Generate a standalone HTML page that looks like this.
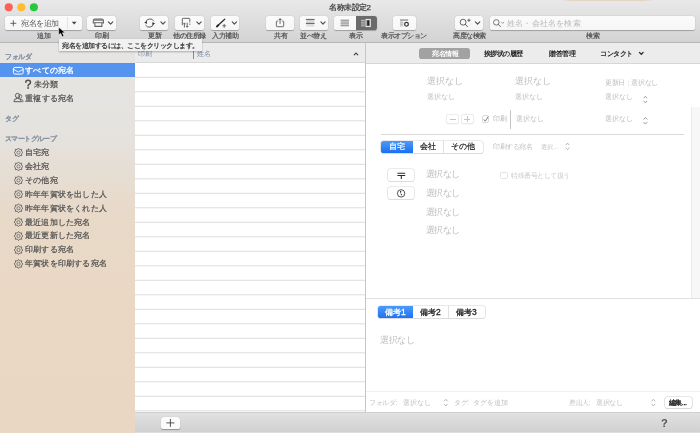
<!DOCTYPE html>
<html><head><meta charset="utf-8">
<style>
*{margin:0;padding:0;box-sizing:border-box}
html,body{width:700px;height:433px;overflow:hidden;background:#fff;font-family:"Liberation Sans",sans-serif;position:relative}
.a{position:absolute}
.t{position:absolute;white-space:nowrap;will-change:transform}
</style></head><body>
<div class="a" style="left:0px;top:0px;width:700px;height:43px;background:linear-gradient(#e9e9e9,#e2e2e2 30%,#d3d3d3);border-bottom:1px solid #b7b7b7"></div>
<div class="a" style="left:560px;top:0px;width:95px;height:1px;background:linear-gradient(90deg,rgba(226,214,196,0),#e2d6c2 12%,#e2d6c2 88%,rgba(226,214,196,0))"></div>
<svg class="a" style="left:0;top:0" width="42" height="16" viewBox="0 0 42 16"><circle cx="8.75" cy="7.2" r="4.05" fill="#fe5f57"/><circle cx="21.3" cy="7.2" r="4.05" fill="#febc2e"/><circle cx="33.9" cy="7.2" r="4.05" fill="#29c73f"/></svg>
<div class="t" style="left:328.5px;top:1.70px;font-size:8px;line-height:11px;color:#404040;letter-spacing:-0.5px;-webkit-text-stroke:0.25px #404040;">名称未設定2</div>
<div class="a" style="left:5.3px;top:16px;width:76.4px;height:13.6px;border-radius:2.6px;background:linear-gradient(#fbfbfb,#f6f6f6);box-shadow:0 0.5px 0.8px rgba(0,0,0,.25),0 0 0 0.3px rgba(0,0,0,.06)"></div>
<div class="a" style="left:87px;top:16px;width:28.8px;height:13.6px;border-radius:2.6px;background:linear-gradient(#fbfbfb,#f6f6f6);box-shadow:0 0.5px 0.8px rgba(0,0,0,.25),0 0 0 0.3px rgba(0,0,0,.06)"></div>
<div class="a" style="left:139.8px;top:16px;width:28.2px;height:13.6px;border-radius:2.6px;background:linear-gradient(#fbfbfb,#f6f6f6);box-shadow:0 0.5px 0.8px rgba(0,0,0,.25),0 0 0 0.3px rgba(0,0,0,.06)"></div>
<div class="a" style="left:175.4px;top:16px;width:28.4px;height:13.6px;border-radius:2.6px;background:linear-gradient(#fbfbfb,#f6f6f6);box-shadow:0 0.5px 0.8px rgba(0,0,0,.25),0 0 0 0.3px rgba(0,0,0,.06)"></div>
<div class="a" style="left:211px;top:16px;width:28.3px;height:13.6px;border-radius:2.6px;background:linear-gradient(#fbfbfb,#f6f6f6);box-shadow:0 0.5px 0.8px rgba(0,0,0,.25),0 0 0 0.3px rgba(0,0,0,.06)"></div>
<div class="a" style="left:266px;top:16px;width:28px;height:13.6px;border-radius:2.6px;background:linear-gradient(#fbfbfb,#f6f6f6);box-shadow:0 0.5px 0.8px rgba(0,0,0,.25),0 0 0 0.3px rgba(0,0,0,.06)"></div>
<div class="a" style="left:299.8px;top:16px;width:28.2px;height:13.6px;border-radius:2.6px;background:linear-gradient(#fbfbfb,#f6f6f6);box-shadow:0 0.5px 0.8px rgba(0,0,0,.25),0 0 0 0.3px rgba(0,0,0,.06)"></div>
<div class="a" style="left:393px;top:16px;width:23.2px;height:13.6px;border-radius:2.6px;background:linear-gradient(#fbfbfb,#f6f6f6);box-shadow:0 0.5px 0.8px rgba(0,0,0,.25),0 0 0 0.3px rgba(0,0,0,.06)"></div>
<div class="a" style="left:454.8px;top:16px;width:28.2px;height:13.6px;border-radius:2.6px;background:linear-gradient(#fbfbfb,#f6f6f6);box-shadow:0 0.5px 0.8px rgba(0,0,0,.25),0 0 0 0.3px rgba(0,0,0,.06)"></div>
<div class="a" style="left:490px;top:16px;width:204.8px;height:13.6px;border-radius:2.6px;background:linear-gradient(#fbfbfb,#f6f6f6);box-shadow:0 0.5px 0.8px rgba(0,0,0,.25),0 0 0 0.3px rgba(0,0,0,.06)"></div>
<div class="a" style="left:334px;top:16px;width:43.2px;height:13.6px;border-radius:2.6px;background:linear-gradient(#fbfbfb,#f6f6f6);box-shadow:0 0.5px 0.8px rgba(0,0,0,.25),0 0 0 0.3px rgba(0,0,0,.06);overflow:hidden"></div>
<div class="a" style="left:356px;top:16px;width:21.2px;height:13.6px;background:#6b6b6b;border-radius:0 2.6px 2.6px 0"></div>
<div class="a" style="left:66.6px;top:16.8px;width:0.7px;height:12px;background:#e4e4e4"></div>
<div class="t" style="left:21.2px;top:17.60px;font-size:8px;line-height:11px;color:#555;letter-spacing:-0.4px;">宛名を追加</div>
<div class="t" style="left:506.5px;top:17.50px;font-size:8px;line-height:11px;color:#b9b9b9;letter-spacing:0.2px;">姓名・会社名を検索</div>
<div class="t" style="left:37.3px;top:31.10px;font-size:6.5px;line-height:9px;color:#505050;letter-spacing:-0.5px;-webkit-text-stroke:0.2px #505050;">追加</div>
<div class="t" style="left:95.1px;top:31.10px;font-size:6.5px;line-height:9px;color:#505050;letter-spacing:-0.5px;-webkit-text-stroke:0.2px #505050;">印刷</div>
<div class="t" style="left:147.7px;top:31.10px;font-size:6.5px;line-height:9px;color:#505050;letter-spacing:-0.5px;-webkit-text-stroke:0.2px #505050;">更新</div>
<div class="t" style="left:173.25px;top:31.10px;font-size:6.5px;line-height:9px;color:#505050;letter-spacing:-0.5px;-webkit-text-stroke:0.2px #505050;">他の住所録</div>
<div class="t" style="left:211.8px;top:31.10px;font-size:6.5px;line-height:9px;color:#505050;letter-spacing:-0.5px;-webkit-text-stroke:0.2px #505050;">入力補助</div>
<div class="t" style="left:273.7px;top:31.10px;font-size:6.5px;line-height:9px;color:#505050;letter-spacing:-0.5px;-webkit-text-stroke:0.2px #505050;">共有</div>
<div class="t" style="left:299.9px;top:31.10px;font-size:6.5px;line-height:9px;color:#505050;letter-spacing:-0.5px;-webkit-text-stroke:0.2px #505050;">並べ替え</div>
<div class="t" style="left:349.1px;top:31.10px;font-size:6.5px;line-height:9px;color:#505050;letter-spacing:-0.5px;-webkit-text-stroke:0.2px #505050;">表示</div>
<div class="t" style="left:381.35px;top:31.10px;font-size:6.5px;line-height:9px;color:#505050;letter-spacing:-0.5px;-webkit-text-stroke:0.2px #505050;">表示オプション</div>
<div class="t" style="left:452.65px;top:31.10px;font-size:6.5px;line-height:9px;color:#505050;letter-spacing:-0.5px;-webkit-text-stroke:0.2px #505050;">高度な検索</div>
<div class="t" style="left:586.1px;top:31.10px;font-size:6.5px;line-height:9px;color:#505050;letter-spacing:-0.5px;-webkit-text-stroke:0.2px #505050;">検索</div>
<svg class="a" style="left:0;top:0" width="700" height="43" viewBox="0 0 700 43">
 <g fill="none" stroke="#505050" stroke-width="1.2" stroke-linecap="round" stroke-linejoin="round">
  <path d="M108.4 21.9 L110.6 24.1 L112.8 21.9"/>
  <path d="M160.9 21.9 L163 24.1 L165.1 21.9"/>
  <path d="M196.8 21.9 L199 24.1 L201.2 21.9"/>
  <path d="M232.3 21.9 L234.4 24.1 L236.5 21.9"/>
  <path d="M320.9 21.9 L323 24.1 L325.1 21.9"/>
  <path d="M475.4 21.9 L477.6 24.1 L479.8 21.9"/>
 </g>
 <path d="M5 0" />
 <!-- + in add button -->
 <path d="M10.4 23.3 H16.3 M13.35 20.3 V26.3" stroke="#555" stroke-width="0.9"/>
 <path d="M71.8 21.8 H76.6 L74.2 24.4 Z" fill="#444"/>
 <!-- printer -->
 <path d="M93.3 23.6 V20.6 Q93.3 19 95 19 H101.7 Q103.4 19 103.4 20.6 V23.6" fill="none" stroke="#666" stroke-width="1.1"/>
 <rect x="93.6" y="19.2" width="9.5" height="1.6" fill="#7a7a7a"/>
 <path d="M93.2 22.7 H103.5" stroke="#666" stroke-width="1"/>
 <path d="M94.9 22.9 V26.4 H101.9 V22.9" fill="none" stroke="#666" stroke-width="1.1"/>
 <!-- update -->
 <path d="M145.7 22.6 A4.4 4.4 0 0 1 153.9 21.2" fill="none" stroke="#555" stroke-width="0.95"/>
 <path d="M153.6 23.7 A4.4 4.4 0 0 1 145.5 25" fill="none" stroke="#555" stroke-width="0.95"/>
 <path d="M144.2 22.6 L146.9 21.3 L146.9 24.1 Z" fill="#333"/>
 <path d="M155.1 23.6 L152.4 24.9 L152.4 22.1 Z" fill="#333"/>
 <!-- other address book -->
 <path d="M182.3 25.2 V19.1 Q182.3 18.3 183.1 18.3 H189 Q189.8 18.3 189.8 19.1 V21.8" fill="none" stroke="#5a5a5a" stroke-width="0.95"/>
 <path d="M189.8 22.5 V23.3 M189.8 23.9 V24.8" fill="none" stroke="#5a5a5a" stroke-width="0.95"/>
 <path d="M184.4 27.5 V23.4 M183.4 24.2 L184.4 22.9 L185.4 24.2 M187.2 22.7 V26.8 M186.2 26 L187.2 27.3 L188.2 26" fill="none" stroke="#4a4a4a" stroke-width="0.85"/>
 <!-- input helper -->
 <path d="M217.6 25.8 L224.7 19.3" fill="none" stroke="#333" stroke-width="1.35" stroke-linecap="round"/>
 <path d="M216.9 26.5 L218.4 25.1" stroke="#222" stroke-width="1.8" stroke-linecap="round"/>
 <path d="M222.3 25.8 H226.1 M224.2 23.9 V27.7" stroke="#707070" stroke-width="1.1"/>
 <!-- share -->
 <path d="M278.2 21 H277.2 Q276.4 21 276.4 21.8 V25.9 Q276.4 26.7 277.2 26.7 H282.9 Q283.7 26.7 283.7 25.9 V21.8 Q283.7 21 282.9 21 H281.9" fill="none" stroke="#6a6a6a" stroke-width="1"/>
 <path d="M280.05 23.8 V19.2" stroke="#6a6a6a" stroke-width="1"/>
 <path d="M278.2 20.1 L280.05 17.9 L281.9 20.1 Z" fill="#6a6a6a"/>
 <!-- sort -->
 <rect x="306.3" y="20.1" width="8" height="2.7" fill="#dadada"/>
 <rect x="306.3" y="24" width="8" height="2.6" fill="#dcdcdc"/>
 <rect x="305.9" y="18.9" width="8.7" height="1.2" fill="#6e6e6e"/>
 <rect x="305.9" y="22.8" width="8.7" height="1.2" fill="#6e6e6e"/>
 <!-- view list icon -->
 <rect x="340.6" y="19.6" width="8.4" height="1.3" fill="#9c9c9c"/>
 <rect x="340.6" y="21.4" width="8.4" height="1.3" fill="#9c9c9c"/>
 <rect x="340.6" y="23.2" width="8.4" height="1.3" fill="#9c9c9c"/>
 <rect x="340.6" y="25" width="8.4" height="1.3" fill="#9c9c9c"/>
 <!-- view detail icon (on dark) -->
 <rect x="361" y="19.8" width="3.8" height="1.2" fill="#b5b5b5"/>
 <rect x="361" y="21.6" width="3.8" height="1.2" fill="#b5b5b5"/>
 <rect x="361" y="23.4" width="3.8" height="1.2" fill="#b5b5b5"/>
 <rect x="361" y="25.2" width="3.8" height="1.2" fill="#b5b5b5"/>
 <rect x="366" y="19.4" width="4.3" height="7.2" fill="none" stroke="#fafafa" stroke-width="0.9"/>
 <rect x="367.3" y="20.7" width="1.7" height="4.6" fill="#222"/>
 <!-- display options -->
 <rect x="400" y="19.4" width="8.2" height="1.3" fill="#8a8a8a"/>
 <rect x="400" y="21.2" width="3.3" height="5.5" fill="#d2d2d2"/>
 <rect x="400" y="22.6" width="3.3" height="0.6" fill="#b8b8b8"/>
 <rect x="400" y="24.4" width="3.3" height="0.6" fill="#b8b8b8"/>
 <circle cx="406.5" cy="24.25" r="1.85" fill="#fff" stroke="#333" stroke-width="1.25"/>
 <!-- advanced search -->
 <circle cx="463.1" cy="22.2" r="2.95" fill="none" stroke="#555" stroke-width="0.9"/>
 <path d="M465.2 24.3 L467.5 26.6" stroke="#555" stroke-width="1" stroke-linecap="round"/>
 <path d="M467.3 20.25 H470.5 M468.9 18.65 V21.85" stroke="#444" stroke-width="0.8"/>
 <!-- search field -->
 <circle cx="496.3" cy="22.4" r="2.75" fill="none" stroke="#666" stroke-width="0.9"/>
 <path d="M498.3 24.4 L500.5 26.6" stroke="#666" stroke-width="1" stroke-linecap="round"/>
 <path d="M501.4 22.1 L502.65 23.4 L503.9 22.1" fill="none" stroke="#777" stroke-width="0.75"/>
</svg>
<div class="a" style="left:0px;top:43px;width:135px;height:390px;background:linear-gradient(#e6e5e3 0%,#e5e3e0 22%,#e6ded5 32%,#e8d9c8 45%,#e9d8c5 60%,#e9d7c3 100%)"></div>
<div class="t" style="left:4.6px;top:51.60px;font-size:6.5px;line-height:9px;color:#8490a0;letter-spacing:-0.3px;-webkit-text-stroke:0.4px #8490a0;">フォルダ</div>
<div class="a" style="left:0px;top:63.3px;width:135px;height:13.6px;background:#5594ee"></div>
<div class="t" style="left:24.6px;top:64.60px;font-size:8px;line-height:11px;color:#fff;letter-spacing:0.3px;-webkit-text-stroke:0.3px #fff;">すべての宛名</div>
<div class="t" style="left:34.4px;top:78.90px;font-size:8px;line-height:11px;color:#4a4a4a;letter-spacing:0.2px;-webkit-text-stroke:0.2px #4a4a4a;">未分類</div>
<div class="t" style="left:24.6px;top:92.60px;font-size:8px;line-height:11px;color:#4a4a4a;letter-spacing:0.3px;-webkit-text-stroke:0.2px #4a4a4a;">重複する宛名</div>
<div class="t" style="left:4.6px;top:113.70px;font-size:6.5px;line-height:9px;color:#8490a0;letter-spacing:-0.3px;-webkit-text-stroke:0.4px #8490a0;">タグ</div>
<div class="t" style="left:4.6px;top:133.80px;font-size:6.5px;line-height:9px;color:#8490a0;letter-spacing:-0.6px;-webkit-text-stroke:0.4px #8490a0;">スマートグループ</div>
<div class="t" style="left:25px;top:146.90px;font-size:8px;line-height:11px;color:#4e4e4e;letter-spacing:0.2px;-webkit-text-stroke:0.2px #4e4e4e;">自宅宛</div>
<div class="t" style="left:25px;top:160.83px;font-size:8px;line-height:11px;color:#4e4e4e;letter-spacing:0.2px;-webkit-text-stroke:0.2px #4e4e4e;">会社宛</div>
<div class="t" style="left:25px;top:174.76px;font-size:8px;line-height:11px;color:#4e4e4e;letter-spacing:0.2px;-webkit-text-stroke:0.2px #4e4e4e;">その他宛</div>
<div class="t" style="left:25px;top:188.69px;font-size:8px;line-height:11px;color:#4e4e4e;letter-spacing:0.2px;-webkit-text-stroke:0.2px #4e4e4e;">昨年年賀状を出した人</div>
<div class="t" style="left:25px;top:202.62px;font-size:8px;line-height:11px;color:#4e4e4e;letter-spacing:0.2px;-webkit-text-stroke:0.2px #4e4e4e;">昨年年賀状をくれた人</div>
<div class="t" style="left:25px;top:216.55px;font-size:8px;line-height:11px;color:#4e4e4e;letter-spacing:0.2px;-webkit-text-stroke:0.2px #4e4e4e;">最近追加した宛名</div>
<div class="t" style="left:25px;top:230.48px;font-size:8px;line-height:11px;color:#4e4e4e;letter-spacing:0.2px;-webkit-text-stroke:0.2px #4e4e4e;">最近更新した宛名</div>
<div class="t" style="left:25px;top:244.41px;font-size:8px;line-height:11px;color:#4e4e4e;letter-spacing:0.2px;-webkit-text-stroke:0.2px #4e4e4e;">印刷する宛名</div>
<div class="t" style="left:25px;top:258.34px;font-size:8px;line-height:11px;color:#4e4e4e;letter-spacing:0.2px;-webkit-text-stroke:0.2px #4e4e4e;">年賀状を印刷する宛名</div>
<svg class="a" style="left:0;top:0" width="135" height="300" viewBox="0 0 135 300">
 <rect x="13.4" y="67.4" width="9.8" height="6.7" rx="1.6" fill="none" stroke="#fff" stroke-width="1"/>
 <path d="M13.6 69.4 L18.3 72 L23 69.4" fill="none" stroke="#fff" stroke-width="0.9"/>
 <path d="M25.8 82.3 Q25.8 80.3 28.1 80.3 Q30.5 80.3 30.5 82.3 Q30.5 83.7 29 84.4 Q28.1 84.9 28.1 86" fill="none" stroke="#505050" stroke-width="1.5" stroke-linecap="round"/>
 <circle cx="28.1" cy="88" r="0.9" fill="#505050"/>
 <circle cx="17.6" cy="95.6" r="2.2" fill="none" stroke="#5a5a5a" stroke-width="1"/>
 <path d="M13.9 101.7 Q13.9 98.4 17.6 98.4 Q21.3 98.4 21.3 101.7 Z" fill="none" stroke="#5a5a5a" stroke-width="1"/>
 <circle cx="20.1" cy="96.4" r="1.8" fill="none" stroke="#6a6a6a" stroke-width="0.85"/>
 <path d="M20.6 99 Q23.2 99.3 23.2 101.7 H21.6" fill="none" stroke="#6a6a6a" stroke-width="0.85"/>
 <polygon points="18.50,148.00 19.74,149.50 21.68,149.32 21.50,151.26 23.00,152.50 21.50,153.74 21.68,155.68 19.74,155.50 18.50,157.00 17.26,155.50 15.32,155.68 15.50,153.74 14.00,152.50 15.50,151.26 15.32,149.32 17.26,149.50" fill="none" stroke="#6a6a6a" stroke-width="0.95" stroke-linejoin="round"/><circle cx="18.5" cy="152.5" r="1.6" fill="none" stroke="#6a6a6a" stroke-width="0.85"/><polygon points="18.50,161.93 19.74,163.43 21.68,163.25 21.50,165.19 23.00,166.43 21.50,167.67 21.68,169.61 19.74,169.43 18.50,170.93 17.26,169.43 15.32,169.61 15.50,167.67 14.00,166.43 15.50,165.19 15.32,163.25 17.26,163.43" fill="none" stroke="#6a6a6a" stroke-width="0.95" stroke-linejoin="round"/><circle cx="18.5" cy="166.43" r="1.6" fill="none" stroke="#6a6a6a" stroke-width="0.85"/><polygon points="18.50,175.86 19.74,177.36 21.68,177.18 21.50,179.12 23.00,180.36 21.50,181.60 21.68,183.54 19.74,183.36 18.50,184.86 17.26,183.36 15.32,183.54 15.50,181.60 14.00,180.36 15.50,179.12 15.32,177.18 17.26,177.36" fill="none" stroke="#6a6a6a" stroke-width="0.95" stroke-linejoin="round"/><circle cx="18.5" cy="180.36" r="1.6" fill="none" stroke="#6a6a6a" stroke-width="0.85"/><polygon points="18.50,189.79 19.74,191.29 21.68,191.11 21.50,193.05 23.00,194.29 21.50,195.53 21.68,197.47 19.74,197.29 18.50,198.79 17.26,197.29 15.32,197.47 15.50,195.53 14.00,194.29 15.50,193.05 15.32,191.11 17.26,191.29" fill="none" stroke="#6a6a6a" stroke-width="0.95" stroke-linejoin="round"/><circle cx="18.5" cy="194.29" r="1.6" fill="none" stroke="#6a6a6a" stroke-width="0.85"/><polygon points="18.50,203.72 19.74,205.22 21.68,205.04 21.50,206.98 23.00,208.22 21.50,209.46 21.68,211.40 19.74,211.22 18.50,212.72 17.26,211.22 15.32,211.40 15.50,209.46 14.00,208.22 15.50,206.98 15.32,205.04 17.26,205.22" fill="none" stroke="#6a6a6a" stroke-width="0.95" stroke-linejoin="round"/><circle cx="18.5" cy="208.22" r="1.6" fill="none" stroke="#6a6a6a" stroke-width="0.85"/><polygon points="18.50,217.65 19.74,219.15 21.68,218.97 21.50,220.91 23.00,222.15 21.50,223.39 21.68,225.33 19.74,225.15 18.50,226.65 17.26,225.15 15.32,225.33 15.50,223.39 14.00,222.15 15.50,220.91 15.32,218.97 17.26,219.15" fill="none" stroke="#6a6a6a" stroke-width="0.95" stroke-linejoin="round"/><circle cx="18.5" cy="222.15" r="1.6" fill="none" stroke="#6a6a6a" stroke-width="0.85"/><polygon points="18.50,231.58 19.74,233.08 21.68,232.90 21.50,234.84 23.00,236.08 21.50,237.32 21.68,239.26 19.74,239.08 18.50,240.58 17.26,239.08 15.32,239.26 15.50,237.32 14.00,236.08 15.50,234.84 15.32,232.90 17.26,233.08" fill="none" stroke="#6a6a6a" stroke-width="0.95" stroke-linejoin="round"/><circle cx="18.5" cy="236.08" r="1.6" fill="none" stroke="#6a6a6a" stroke-width="0.85"/><polygon points="18.50,245.51 19.74,247.01 21.68,246.83 21.50,248.77 23.00,250.01 21.50,251.25 21.68,253.19 19.74,253.01 18.50,254.51 17.26,253.01 15.32,253.19 15.50,251.25 14.00,250.01 15.50,248.77 15.32,246.83 17.26,247.01" fill="none" stroke="#6a6a6a" stroke-width="0.95" stroke-linejoin="round"/><circle cx="18.5" cy="250.01" r="1.6" fill="none" stroke="#6a6a6a" stroke-width="0.85"/><polygon points="18.50,259.44 19.74,260.94 21.68,260.76 21.50,262.70 23.00,263.94 21.50,265.18 21.68,267.12 19.74,266.94 18.50,268.44 17.26,266.94 15.32,267.12 15.50,265.18 14.00,263.94 15.50,262.70 15.32,260.76 17.26,260.94" fill="none" stroke="#6a6a6a" stroke-width="0.95" stroke-linejoin="round"/><circle cx="18.5" cy="263.94" r="1.6" fill="none" stroke="#6a6a6a" stroke-width="0.85"/>
</svg>
<div class="a" style="left:135px;top:43px;width:230px;height:20px;background:#ebebeb;border-bottom:1px solid #d8d8d8"></div>
<div class="t" style="left:138.3px;top:49.00px;font-size:6.5px;line-height:9px;color:#8391a5;letter-spacing:-0.5px;">印刷</div>
<div class="a" style="left:193px;top:50.8px;width:0.9px;height:8.6px;background:#8a8a8a"></div>
<div class="t" style="left:197.2px;top:48.80px;font-size:6.5px;line-height:9px;color:#8391a5;letter-spacing:-0.5px;">姓名</div>
<svg class="a" style="left:340px;top:50px" width="24" height="8" viewBox="340 50 24 8"><path d="M354.2 54.9 L356 53 L357.8 54.9" fill="none" stroke="#444" stroke-width="1.1" stroke-linecap="round"/></svg>
<svg class="a" style="left:135px;top:0" width="230" height="412" viewBox="0 0 230 412"><rect x="0" y="76.80" width="230" height="1" fill="#dddddd"/><rect x="0" y="91.30" width="230" height="1" fill="#dddddd"/><rect x="0" y="105.80" width="230" height="1" fill="#dddddd"/><rect x="0" y="120.30" width="230" height="1" fill="#dddddd"/><rect x="0" y="134.80" width="230" height="1" fill="#dddddd"/><rect x="0" y="149.30" width="230" height="1" fill="#dddddd"/><rect x="0" y="163.80" width="230" height="1" fill="#dddddd"/><rect x="0" y="178.30" width="230" height="1" fill="#dddddd"/><rect x="0" y="192.80" width="230" height="1" fill="#dddddd"/><rect x="0" y="207.30" width="230" height="1" fill="#dddddd"/><rect x="0" y="221.80" width="230" height="1" fill="#dddddd"/><rect x="0" y="236.30" width="230" height="1" fill="#dddddd"/><rect x="0" y="250.80" width="230" height="1" fill="#dddddd"/><rect x="0" y="265.30" width="230" height="1" fill="#dddddd"/><rect x="0" y="279.80" width="230" height="1" fill="#dddddd"/><rect x="0" y="294.30" width="230" height="1" fill="#dddddd"/><rect x="0" y="308.80" width="230" height="1" fill="#dddddd"/><rect x="0" y="323.30" width="230" height="1" fill="#dddddd"/><rect x="0" y="337.80" width="230" height="1" fill="#dddddd"/><rect x="0" y="352.30" width="230" height="1" fill="#dddddd"/><rect x="0" y="366.80" width="230" height="1" fill="#dddddd"/><rect x="0" y="381.30" width="230" height="1" fill="#dddddd"/><rect x="0" y="395.80" width="230" height="1" fill="#dddddd"/><rect x="0" y="410.30" width="230" height="1" fill="#dddddd"/></svg>
<div class="a" style="left:365px;top:42.5px;width:1px;height:370px;background:#c6c6c6"></div>
<div class="a" style="left:366px;top:43px;width:334px;height:20.5px;background:#ececec;border-bottom:1px solid #d6d6d6"></div>
<div class="a" style="left:418.6px;top:47.8px;width:51.8px;height:10.8px;border-radius:2.8px;background:#a2a2a2"></div>
<div class="t" style="left:431.8px;top:48.90px;font-size:6.5px;line-height:9px;color:#fff;letter-spacing:-0.5px;font-weight:bold;">宛名情報</div>
<div class="t" style="left:484.3px;top:48.90px;font-size:6.5px;line-height:9px;color:#222;letter-spacing:-0.6px;font-weight:bold;">挨拶状の履歴</div>
<div class="t" style="left:549.3px;top:48.90px;font-size:6.5px;line-height:9px;color:#222;letter-spacing:-0.5px;font-weight:bold;">贈答管理</div>
<div class="t" style="left:599.7px;top:48.90px;font-size:6.5px;line-height:9px;color:#222;letter-spacing:-0.5px;font-weight:bold;">コンタクト</div>
<svg class="a" style="left:630px;top:48px" width="20" height="12" viewBox="630 48 20 12"><path d="M639.5 52.5 L641.3 54.3 L643.1 52.5" fill="none" stroke="#333" stroke-width="1.3" stroke-linecap="round"/></svg>
<div class="a" style="left:690.8px;top:106.8px;width:9.2px;height:191px;background:#f7f7f7;border-left:1px solid #ebebeb"></div>
<div class="t" style="left:427.2px;top:75.80px;font-size:8.5px;line-height:11px;color:#bcbcbc;">選択なし</div>
<div class="t" style="left:515px;top:75.60px;font-size:8.5px;line-height:11px;color:#bcbcbc;">選択なし</div>
<div class="t" style="left:604.8px;top:78.10px;font-size:6.5px;line-height:9px;color:#bcbcbc;letter-spacing:-0.4px;">更新日：選択なし</div>
<div class="t" style="left:427.3px;top:91.80px;font-size:7px;line-height:10px;color:#bcbcbc;">選択なし</div>
<div class="t" style="left:515.2px;top:92.00px;font-size:7px;line-height:10px;color:#bcbcbc;">選択なし</div>
<div class="t" style="left:604.8px;top:91.60px;font-size:7px;line-height:10px;color:#bcbcbc;">選択なし</div>
<div class="t" style="left:516.2px;top:114.20px;font-size:7px;line-height:10px;color:#bcbcbc;">選択なし</div>
<div class="t" style="left:604.8px;top:113.80px;font-size:7px;line-height:10px;color:#bcbcbc;">選択なし</div>
<div class="a" style="left:446.3px;top:113.7px;width:13.2px;height:10.7px;border:0.7px solid #ebebeb;border-radius:2.2px;box-shadow:0 0.4px 0.5px rgba(0,0,0,.06)"></div>
<div class="a" style="left:460.8px;top:113.7px;width:13px;height:10.7px;border:0.7px solid #ebebeb;border-radius:2.2px;box-shadow:0 0.4px 0.5px rgba(0,0,0,.06)"></div>
<div class="a" style="left:449.7px;top:118.6px;width:6.2px;height:0.8px;background:#c4c4c4"></div>
<div class="a" style="left:464px;top:118.6px;width:6.2px;height:0.8px;background:#c4c4c4"></div>
<div class="a" style="left:466.7px;top:115.9px;width:0.8px;height:6.2px;background:#c4c4c4"></div>
<div class="a" style="left:481.7px;top:115px;width:7.6px;height:8.2px;border:0.7px solid #dcdcdc;border-radius:2px"></div>
<div class="t" style="left:492.5px;top:114.00px;font-size:7px;line-height:10px;color:#b8b8b8;letter-spacing:-0.4px;">印刷</div>
<div class="a" style="left:510.3px;top:110.2px;width:1px;height:18.6px;background:#c4c4c4"></div>
<div class="a" style="left:380.7px;top:133.8px;width:303.6px;height:1px;background:#dadada"></div>
<svg class="a" style="left:0;top:0" width="700" height="433" viewBox="0 0 700 433"><path d="M643.60 98.30 L645.40 96.30 L647.20 98.30 M643.60 100.90 L645.40 102.90 L647.20 100.90" fill="none" stroke="#8a8a8a" stroke-width="0.85"/><path d="M643.60 119.50 L645.40 117.50 L647.20 119.50 M643.60 122.10 L645.40 124.10 L647.20 122.10" fill="none" stroke="#8a8a8a" stroke-width="0.85"/><path d="M565.70 145.10 L567.50 143.10 L569.30 145.10 M565.70 147.70 L567.50 149.70 L569.30 147.70" fill="none" stroke="#a8a8a8" stroke-width="0.85"/><path d="M444.00 401.30 L445.80 399.30 L447.60 401.30 M444.00 403.90 L445.80 405.90 L447.60 403.90" fill="none" stroke="#aaa" stroke-width="0.85"/><path d="M651.50 401.30 L653.30 399.30 L655.10 401.30 M651.50 403.90 L653.30 405.90 L655.10 403.90" fill="none" stroke="#aaa" stroke-width="0.85"/><path d="M483.7 119.4 L485.3 121.2 L488.2 116.6" fill="none" stroke="#666" stroke-width="0.85"/></svg>
<div class="a" style="left:380.8px;top:141px;width:102.2px;height:11.9px;border-radius:2.6px;background:#fff;box-shadow:0 0 0 0.6px #d6d6d6,0 0.7px 0.7px rgba(0,0,0,.12);overflow:hidden"><div class="a" style="left:0;top:0;width:32px;height:12px;background:linear-gradient(#4c9bfa,#1a6ff3)"></div><div class="a" style="left:62.4px;top:0;width:0.6px;height:12px;background:#e0e0e0"></div></div>
<div class="t" style="left:388.7px;top:142.00px;font-size:7.5px;line-height:10px;color:#fff;-webkit-text-stroke:0.2px #fff;">自宅</div>
<div class="t" style="left:419.7px;top:142.00px;font-size:7.5px;line-height:10px;color:#222;-webkit-text-stroke:0.2px #222;">会社</div>
<div class="t" style="left:450.6px;top:142.00px;font-size:7.5px;line-height:10px;color:#222;-webkit-text-stroke:0.2px #222;">その他</div>
<div class="t" style="left:493.4px;top:141.90px;font-size:6.5px;line-height:9px;color:#c2c2c2;letter-spacing:-0.5px;">印刷する宛名</div>
<div class="t" style="left:541px;top:141.90px;font-size:6.2px;line-height:9px;color:#c2c2c2;">選択…</div>
<div class="a" style="left:388px;top:168.9px;width:26.4px;height:12.3px;border-radius:2.6px;background:#fff;box-shadow:0 0 0 0.6px #d8d8d8,0 0.7px 0.7px rgba(0,0,0,.12)"></div>
<div class="a" style="left:388px;top:186.6px;width:26.4px;height:12.6px;border-radius:2.6px;background:#fff;box-shadow:0 0 0 0.6px #d8d8d8,0 0.7px 0.7px rgba(0,0,0,.12)"></div>
<svg class="a" style="left:388px;top:168px" width="27" height="32" viewBox="388 168 27 32">
 <path d="M397.4 173.3 H405.2 M397.4 175.5 H405.2 M401.3 175.5 V178.9" fill="none" stroke="#2a2a2a" stroke-width="1.05"/>
 <circle cx="401.1" cy="193.4" r="3.7" fill="none" stroke="#333" stroke-width="0.85"/>
 <path d="M400 191 Q399.6 193.6 401.6 195.6 L402.4 195 L401.5 193.8 L401 194.1 Q400.4 193 400.8 192.2 L401.3 192.3 L401.2 190.9 Z" fill="#333"/>
</svg>
<div class="t" style="left:425.8px;top:169.20px;font-size:8.5px;line-height:11px;color:#bcbcbc;letter-spacing:-0.6px;">選択なし</div>
<div class="t" style="left:425.8px;top:187.90px;font-size:8.5px;line-height:11px;color:#bcbcbc;letter-spacing:-0.6px;">選択なし</div>
<div class="t" style="left:425.8px;top:206.50px;font-size:8.5px;line-height:11px;color:#bcbcbc;letter-spacing:-0.6px;">選択なし</div>
<div class="t" style="left:425.8px;top:225.20px;font-size:8.5px;line-height:11px;color:#bcbcbc;letter-spacing:-0.6px;">選択なし</div>
<div class="a" style="left:500.3px;top:172px;width:7.6px;height:7.4px;border:0.7px solid #e2e2e2;border-radius:1.6px"></div>
<div class="t" style="left:510.6px;top:171.20px;font-size:6.5px;line-height:9px;color:#c8c8c8;letter-spacing:-0.5px;">特殊番号として扱う</div>
<div class="a" style="left:366px;top:297.6px;width:325px;height:1px;background:#e0e0e0"></div>
<div class="a" style="left:691px;top:297.6px;width:9px;height:1px;background:#e0e0e0"></div>
<div class="a" style="left:378.1px;top:305.6px;width:106.5px;height:12.6px;border-radius:2.6px;background:#fff;box-shadow:0 0 0 0.6px #d6d6d6,0 0.7px 0.7px rgba(0,0,0,.12);overflow:hidden"><div class="a" style="left:0;top:0;width:34.7px;height:13px;background:linear-gradient(#4c9bfa,#1a6ff3)"></div><div class="a" style="left:70.4px;top:0;width:0.6px;height:13px;background:#e0e0e0"></div></div>
<div class="t" style="left:385px;top:307.20px;font-size:7.5px;line-height:10px;color:#fff;-webkit-text-stroke:0.3px #fff;">備考<span style="font-size:8.5px">1</span></div>
<div class="t" style="left:420.4px;top:307.20px;font-size:7.5px;line-height:10px;color:#222;-webkit-text-stroke:0.3px #222;">備考<span style="font-size:8.5px">2</span></div>
<div class="t" style="left:456.1px;top:307.20px;font-size:7.5px;line-height:10px;color:#222;-webkit-text-stroke:0.3px #222;">備考<span style="font-size:8.5px">3</span></div>
<div class="t" style="left:380.4px;top:335.00px;font-size:8.5px;line-height:11px;color:#bcbcbc;letter-spacing:-0.5px;">選択なし</div>
<div class="a" style="left:366px;top:390.6px;width:334px;height:1px;background:#f0f0f0"></div>
<div class="t" style="left:369.2px;top:398.10px;font-size:6.5px;line-height:9px;color:#c0c0c0;letter-spacing:-0.4px;">フォルダ:</div>
<div class="t" style="left:403.1px;top:397.60px;font-size:7px;line-height:10px;color:#c0c0c0;">選択なし</div>
<div class="t" style="left:454.1px;top:398.10px;font-size:6.5px;line-height:9px;color:#c0c0c0;letter-spacing:-0.4px;">タグ:</div>
<div class="t" style="left:472.7px;top:397.60px;font-size:7px;line-height:10px;color:#c0c0c0;">タグを追加</div>
<div class="t" style="left:568.6px;top:398.10px;font-size:6.5px;line-height:9px;color:#c0c0c0;letter-spacing:-0.4px;">差出人:</div>
<div class="t" style="left:596px;top:397.60px;font-size:7px;line-height:10px;color:#c0c0c0;letter-spacing:-0.5px;">選択なし</div>
<div class="a" style="left:665px;top:397.4px;width:26.8px;height:10.8px;border-radius:2.2px;background:#fff;box-shadow:0 0 0 0.6px #d2d2d2,0 0.7px 0.7px rgba(0,0,0,.12)"></div>
<div class="t" style="left:669px;top:397.90px;font-size:7px;line-height:10px;color:#222;letter-spacing:-0.6px;-webkit-text-stroke:0.3px #222;">編集<span style="letter-spacing:-0.3px">...</span></div>
<div class="a" style="left:135px;top:412px;width:565px;height:21px;background:linear-gradient(#e1e1e1,#d0d0d0);border-top:1px solid #cfcfcf"></div>
<div class="a" style="left:135px;top:432px;width:565px;height:1px;background:#dedede"></div>
<div class="a" style="left:160.8px;top:416.9px;width:19.2px;height:12.1px;border-radius:2.6px;background:#fbfbfb;box-shadow:0 0.5px 0.8px rgba(0,0,0,.3)"></div>
<svg class="a" style="left:160px;top:416px" width="21" height="14" viewBox="160 416 21 14"><path d="M166.4 422.9 H174.4 M170.4 418.9 V426.9" stroke="#3a3a3a" stroke-width="0.85"/></svg>
<div class="t" style="left:660.6px;top:416.60px;font-size:11px;line-height:13px;color:#555;font-weight:bold;">?</div>
<div class="a" style="left:59.2px;top:39px;width:142.8px;height:11.8px;background:#f1f1f1;box-shadow:0 0.6px 1.8px rgba(0,0,0,.28)"></div>
<div class="t" style="left:61.8px;top:40.50px;font-size:6.5px;line-height:9px;color:#333;letter-spacing:-0.5px;-webkit-text-stroke:0.22px #333;">宛名を追加するには、ここをクリックします。</div>
<svg class="a" style="left:55px;top:25px" width="14" height="14" viewBox="55 25 14 14">
 <path d="M58.7 27.3 V35 L60.6 33.3 L62.2 36.7 L63.9 36 L62.4 32.8 H65.2 Z" fill="#000" stroke="#fff" stroke-width="0.5" stroke-linejoin="round"/>
</svg>
</body></html>
